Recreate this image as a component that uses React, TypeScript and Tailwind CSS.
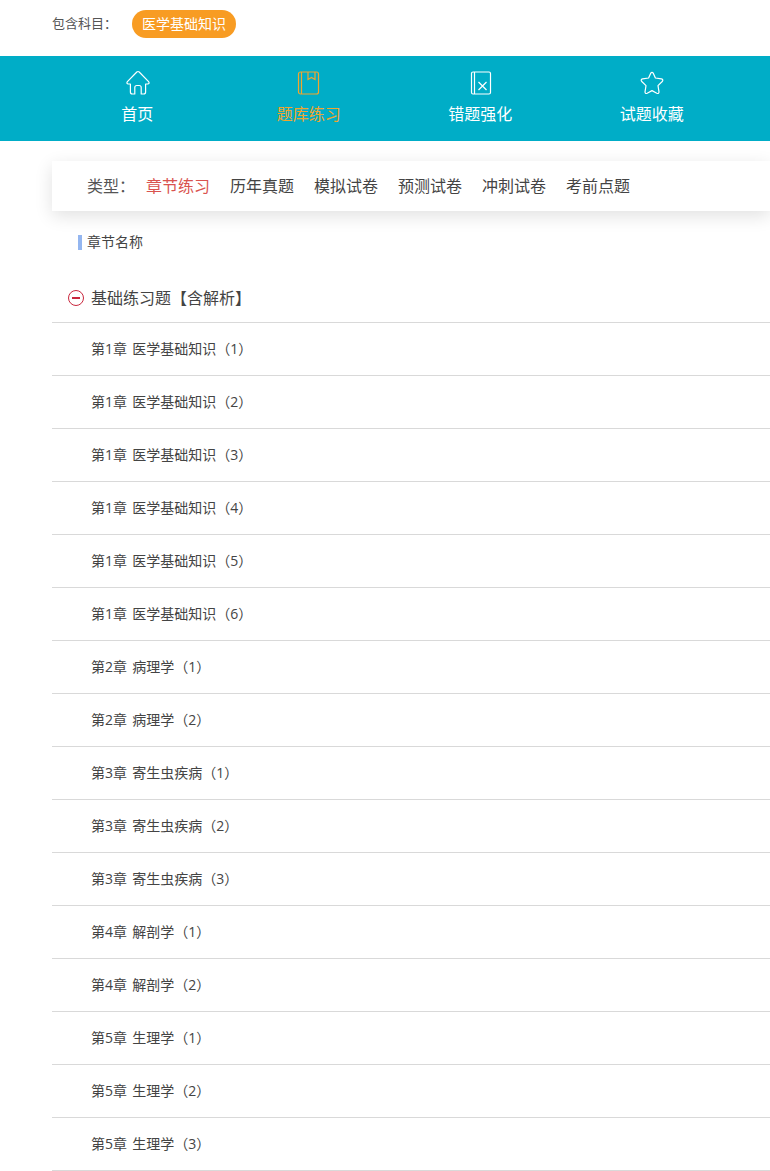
import React from 'react'

const chapters = [
  '第1章 医学基础知识（1）',
  '第1章 医学基础知识（2）',
  '第1章 医学基础知识（3）',
  '第1章 医学基础知识（4）',
  '第1章 医学基础知识（5）',
  '第1章 医学基础知识（6）',
  '第2章 病理学（1）',
  '第2章 病理学（2）',
  '第3章 寄生虫疾病（1）',
  '第3章 寄生虫疾病（2）',
  '第3章 寄生虫疾病（3）',
  '第4章 解剖学（1）',
  '第4章 解剖学（2）',
  '第5章 生理学（1）',
  '第5章 生理学（2）',
  '第5章 生理学（3）',
]

const types = ['历年真题', '模拟试卷', '预测试卷', '冲刺试卷', '考前点题']

function HomeIcon() {
  return (
    <svg width="26" height="26" viewBox="0 0 26 26" fill="none" stroke="currentColor" strokeWidth="1.2" strokeLinejoin="round">
      <path d="M11.8 2 Q13 1 14.2 2 L23.6 11.6 Q25 13.6 22.6 14 L20.6 14 L20.6 22 Q20.6 24 18.6 24 L16.2 24 L16.2 17.5 Q16.2 15.5 14.2 15.5 L11.8 15.5 Q9.8 15.5 9.8 17.5 L9.8 24 L7.4 24 Q5.4 24 5.4 22 L5.4 14 L3.4 14 Q1 13.6 2.4 11.6 Z" />
    </svg>
  )
}

function BookIcon() {
  return (
    <svg width="26" height="26" viewBox="0 0 26 26" fill="none" stroke="currentColor" strokeWidth="1.2">
      <rect x="2.5" y="2" width="20" height="22" rx="2" />
      <path d="M5.5 2 V24 M12 2 V9.5 L15.5 7.5 L19 9.5 V2" />
    </svg>
  )
}

function WrongBookIcon() {
  return (
    <svg width="26" height="26" viewBox="0 0 26 26" fill="none" stroke="currentColor" strokeWidth="1.2">
      <rect x="3.5" y="2" width="19" height="22" rx="1.5" />
      <path d="M6.5 2 V24 M10.5 12 L18.5 20 M18.5 12 L10.5 20" />
    </svg>
  )
}

function StarIcon() {
  return (
    <svg width="26" height="26" viewBox="0 0 26 26" fill="none" stroke="currentColor" strokeWidth="1.2" strokeLinejoin="round">
      <path d="M11.6 3.4 Q13 1.4 14.4 3.4 L16.4 8 L22.4 8.9 Q24.8 9.6 23.2 11.5 L19 15.6 L20 21.8 Q20 24.2 17.8 23.2 L13 20.6 L8.2 23.2 Q6 24.2 6 21.8 L7 15.6 L2.8 11.5 Q1.2 9.6 3.6 8.9 L9.6 8 Z" />
    </svg>
  )
}

function NavItem({ icon, label, active }: { icon: React.ReactNode; label: string; active?: boolean }) {
  return (
    <div className={`flex w-[171.5px] flex-col items-center pt-[14px] ${active ? 'text-[#f0a62e]' : 'text-white'}`}>
      {icon}
      <span className="mr-[1px] mt-[5px] text-base leading-[24px]">{label}</span>
    </div>
  )
}

export default function App() {
  return (
    <div className="h-[1171px] w-[770px] overflow-hidden bg-white font-['Noto_Sans_CJK_SC',sans-serif] text-[#333]">
      {/* Subject */}
      <div className="flex h-[56px] items-start pl-[52px] pt-[10px]">
        <span className="text-[13px] leading-[26px] text-[#555]">包含科目：</span>
        <span className="ml-[15px] h-[28px] rounded-full bg-[#f89c23] px-[10px] text-sm leading-[26px] text-white">医学基础知识</span>
      </div>

      {/* Nav */}
      <div className="flex h-[85px] bg-[#00adc7] pl-[52px]">
        <NavItem icon={<HomeIcon />} label="首页" />
        <NavItem icon={<BookIcon />} label="题库练习" active />
        <NavItem icon={<WrongBookIcon />} label="错题强化" />
        <NavItem icon={<StarIcon />} label="试题收藏" />
      </div>

      <div className="ml-[52px] pt-[20px]">
        {/* Types */}
        <div className="flex h-[50px] items-center bg-white pb-[2px] pl-[35px] text-base shadow-[0_5px_18px_rgba(0,0,0,0.12)]">
          <span className="mr-[11px] text-[#555]">类型：</span>
          <span className="mr-[20px] text-[#d9534f]">章节练习</span>
          {types.map((t) => (
            <span key={t} className="mr-[20px] text-[#444]">{t}</span>
          ))}
        </div>

        {/* Section title */}
        <div className="ml-[26px] mt-[24px] flex h-[15px] items-center border-l-4 border-[#94b6f0] pl-[5px] text-sm text-[#444]">
          <span className="-mt-[3px]">章节名称</span>
        </div>

        {/* Group header */}
        <div className="mt-[33px] flex h-[40px] items-center border-b border-[#d9d9d9] pb-[9px] pl-[16px] text-base text-[#444]">
          <span className="mr-[7px] flex h-[16px] w-[16px] items-center justify-center rounded-full border-[1.5px] border-[#c9283e]">
            <span className="h-[1.5px] w-[8px] bg-[#c9283e]" />
          </span>
          <span className="-mt-[2px]">基础练习题【含解析】</span>
        </div>

        {chapters.map((c) => (
          <div key={c} className="flex h-[53px] items-center border-b border-[#d9d9d9] pl-[39px] font-['Open_Sans','Noto_Sans_CJK_SC',sans-serif] text-sm text-[#444] [word-spacing:1.5px]">
            {c}
          </div>
        ))}
      </div>
    </div>
  )
}
